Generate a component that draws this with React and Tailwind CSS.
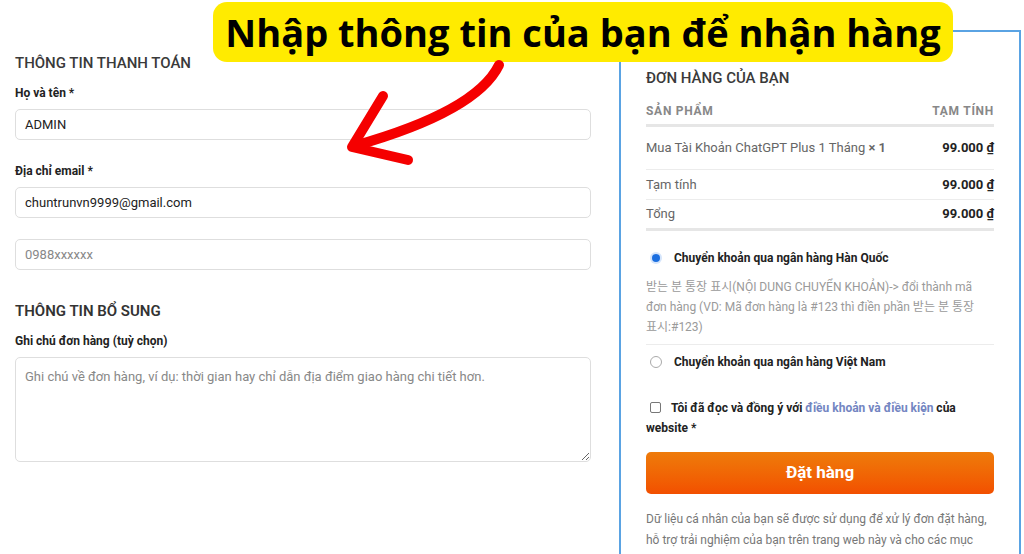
import React from 'react';

const PriceRow = ({ left, right, className }) => (
  <div className={`flex items-center justify-between text-[13px] ${className}`}>
    <span className="text-[#666]">{left}</span>
    <span className="font-bold text-[#222]">{right}</span>
  </div>
);

const App = () => {
  return (
    <div className="relative w-[1024px] h-[554px] overflow-hidden bg-white font-[Roboto,'Noto_Sans_CJK_KR',sans-serif]">
      <div className="flex items-start">
        {/* left: billing */}
        <div className="w-[591px] pl-[15px] pt-[53px] flex flex-col">
          <h3 className="text-[15px] leading-[20px] font-medium text-[#3a3a3a] uppercase">Thông tin thanh toán</h3>
          <label className="block text-[12px] leading-[16px] font-bold text-[#222] mt-[12px]">Họ và tên *</label>
          <div className="mt-[8px] h-[31px] border border-[#dedede] rounded-[5px] px-[9px] flex items-center text-[13px] text-[#222]">ADMIN</div>
          <label className="block text-[12px] leading-[16px] font-bold text-[#222] mt-[23px]">Địa chỉ email *</label>
          <div className="mt-[8px] h-[31px] border border-[#dedede] rounded-[5px] px-[9px] flex items-center text-[13px] text-[#222]">chuntrunvn9999@gmail.com</div>
          <div className="mt-[21px] h-[31px] border border-[#dedede] rounded-[5px] px-[9px] flex items-center text-[13px] text-[#888]">0988xxxxxx</div>

          <h3 className="mt-[31px] text-[15px] leading-[20px] font-semibold text-[#333] uppercase">Thông tin bổ sung</h3>
          <label className="block text-[12px] leading-[16px] font-bold text-[#222] mt-[12px]">Ghi chú đơn hàng (tuỳ chọn)</label>
          <textarea
            readOnly
            className="mt-[8px] h-[105px] w-full border border-[#dedede] rounded-[5px] px-[9px] py-[9px] text-[13px] leading-[20px] text-[#333] placeholder:text-[#888] outline-none"
            placeholder="Ghi chú về đơn hàng, ví dụ: thời gian hay chỉ dẫn địa điểm giao hàng chi tiết hơn."
          />
        </div>

        {/* right: order */}
        <div className="ml-[28px] mt-[30px] w-[402px] h-[600px] border-2 border-b-0 border-[#5aa3e3] px-[25px] pt-[36px]">
          <h3 className="text-[15px] leading-[20px] font-medium text-[#3a3a3a] uppercase">Đơn hàng của bạn</h3>
          <div className="mt-[15px] pb-[5px] flex justify-between text-[12px] leading-[16px] font-bold text-[#888] tracking-[0.06em] uppercase border-b-[3px] border-[#e6e6e6]">
            <span>Sản phẩm</span>
            <span>Tạm tính</span>
          </div>
          <div className="h-[43px] flex items-center justify-between text-[13px] border-b border-[#ececec]">
            <span className="text-[#666]">Mua Tài Khoản ChatGPT Plus 1 Tháng <span className="font-semibold">× 1</span></span>
            <span className="font-bold text-[#222]">99.000 ₫</span>
          </div>
          <PriceRow left="Tạm tính" right="99.000 ₫" className="h-[30px] border-b border-[#ececec]" />
          <PriceRow left="Tổng" right="99.000 ₫" className="h-[31px] border-b-[3px] border-[#e6e6e6]" />

          <div className="mt-[17px] flex items-center h-[20px] pl-[4px]">
            <span className="w-[12px] h-[12px] rounded-full bg-[#d5e5fb] flex items-center justify-center">
              <span className="w-[8px] h-[8px] rounded-full bg-[#1b6fe0]" />
            </span>
            <span className="ml-[12px] text-[12px] font-bold text-[#222]">Chuyển khoản qua ngân hàng Hàn Quốc</span>
          </div>
          <p className="mt-[9px] text-[12px] leading-[20px] text-[#9a9a9a] pb-[7px] border-b border-[#ececec] break-keep">
            받는 분 통장 표시(NỘI DUNG CHUYỂN KHOẢN)-&gt; đổi thành mã đơn hàng (VD: Mã đơn hàng là #123 thì điền phần 받는 분 통장 표시:#123)
          </p>
          <div className="mt-[7px] flex items-center h-[20px] pl-[4px]">
            <span className="w-[12px] h-[12px] rounded-full border border-[#aaa] bg-white" />
            <span className="ml-[12px] text-[12px] font-bold text-[#222]">Chuyển khoản qua ngân hàng Việt Nam</span>
          </div>

          <p className="mt-[26px] text-[12px] leading-[20px] font-bold text-[#222]">
            <span className="inline-block align-[-1px] w-[11px] h-[11px] rounded-[2px] border border-[#777] ml-[4px] mr-[10px]" />
            Tôi đã đọc và đồng ý với <span className="text-[#7385c2]">điều khoản và điều kiện</span> của website *
          </p>

          <button className="mt-[14px] w-full h-[42px] rounded-[5px] bg-gradient-to-b from-[#ee7b0b] to-[#f24f00] text-white text-[17px] font-bold">
            Đặt hàng
          </button>

          <p className="mt-[15px] text-[12px] leading-[21px] text-[#777]">
            Dữ liệu cá nhân của bạn sẽ được sử dụng để xử lý đơn đặt hàng, hỗ trợ trải nghiệm của bạn trên trang web này và cho các mục đích khác được mô tả trong chính sách riêng tư của chúng tôi.
          </p>
        </div>
      </div>

      {/* annotation overlay */}
      <div className="absolute left-[213px] top-[2px] w-[740px] h-[60px] rounded-[14px] bg-[#ffeb00] flex items-center justify-center">
        <span className="font-['Open_Sans',sans-serif] font-bold text-[38px] leading-none text-black">Nhập thông tin của bạn để nhận hàng</span>
      </div>
      <svg className="absolute left-0 top-0 pointer-events-none" width="1024" height="554" viewBox="0 0 1024 554">
        <path d="M499 65 C 483 98, 432 124, 354 146" fill="none" stroke="#f50000" strokeWidth="10" strokeLinecap="round" />
        <path d="M383 96 L 352 147 L 408 160" fill="none" stroke="#f50000" strokeWidth="10" strokeLinecap="round" strokeLinejoin="round" />
      </svg>
    </div>
  );
};

export default App;
